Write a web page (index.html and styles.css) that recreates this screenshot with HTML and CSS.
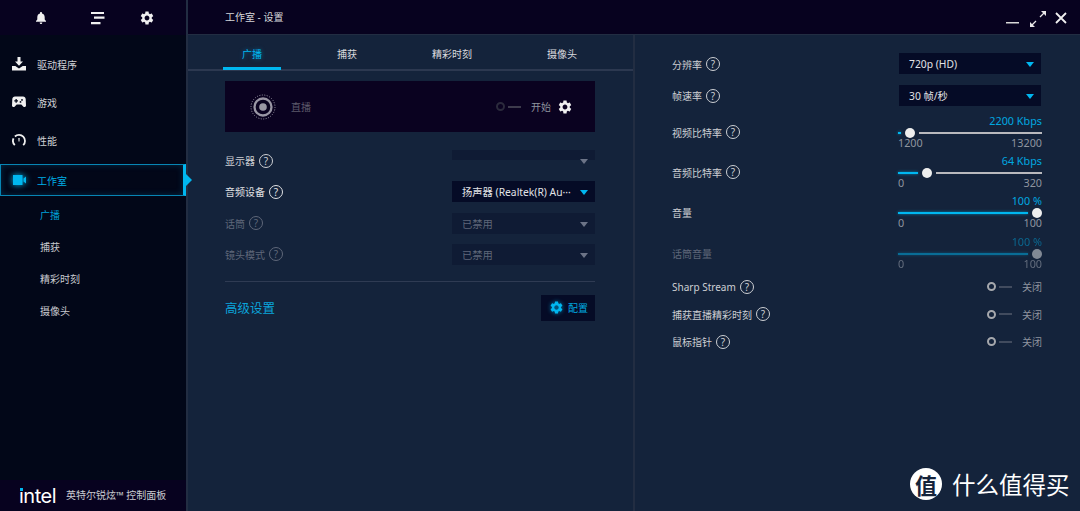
FILE: index.html
```html
<!DOCTYPE html>
<html lang="zh-CN">
<head>
    <meta charset="UTF-8">
    <title>英特尔锐炫 控制面板</title>
    <link rel="stylesheet" href="styles.css">
</head>
<body>
    <svg class="defs" width="0" height="0">
        <symbol id="gear" viewBox="0 0 24 24">
            <path fill-rule="evenodd" d="M19.14 12.94c.04-.3.06-.61.06-.94 0-.32-.02-.64-.07-.94l2.03-1.58c.18-.14.23-.41.12-.61l-1.92-3.32c-.12-.22-.37-.29-.59-.22l-2.39.96c-.5-.38-1.03-.7-1.62-.94l-.36-2.54c-.04-.24-.24-.41-.48-.41h-3.84c-.24 0-.43.17-.47.41l-.36 2.54c-.59.24-1.13.57-1.62.94l-2.39-.96c-.22-.08-.47 0-.59.22L2.74 8.87c-.12.21-.08.47.12.61l2.03 1.58c-.05.3-.09.63-.09.94s.02.64.07.94l-2.03 1.58c-.18.14-.23.41-.12.61l1.92 3.32c.12.22.37.29.59.22l2.39-.96c.5.38 1.03.7 1.62.94l.36 2.54c.05.24.24.41.48.41h3.84c.24 0 .44-.17.47-.41l.36-2.54c.59-.24 1.13-.56 1.62-.94l2.39.96c.22.08.47 0 .59-.22l1.92-3.32c.12-.22.07-.47-.12-.61l-2.01-1.58zM12 15.6c-1.98 0-3.6-1.62-3.6-3.6s1.62-3.6 3.6-3.6 3.6 1.62 3.6 3.6-1.62 3.6-3.6 3.6z"/>
        </symbol>
    </svg>

    <div class="app">
        <aside class="sidebar">
            <div class="side-top">
                <svg class="bell" width="12" height="12" viewBox="0 0 12 12"><path fill="#f0f0f0" d="M6 0c.6 0 1 .4 1 1v.4C8.800 1.900 9.700 3.300 9.700 5.200v2.300L11 9v.7H1V9l1.300-1.500V5.200C2.300 3.300 3.200 1.900 5 1.400V1c0-.6.400-1 1-1zM4.700 10.400h2.600C7.200 11.300 6.700 12 6 12s-1.200-.7-1.300-1.600z"/></svg>
                <svg class="lines" width="14" height="14" viewBox="0 0 14 14"><path fill="#f0f0f0" d="M0 1h13v2H0zM3 5.500h10.500v2.200H3zM0 11h9.500v2.200H0z"/></svg>
                <svg class="top-gear" width="16" height="16"><use href="#gear" fill="#f0f0f0"/></svg>
            </div>

            <nav class="nav">
                <a class="nav-item">
                    <svg width="14" height="14" viewBox="0 0 14 14"><path fill="#f0f0f0" d="M5.500 0h3v4.500h2.500L7 8.800 3 4.500h2.500zM0 9h3.300L7 11.500 10.700 9H14v4.500H0z"/></svg>
                    驱动程序
                </a>
                <a class="nav-item">
                    <svg width="14" height="14" viewBox="0 0 14 12"><path fill="#f0f0f0" fill-rule="evenodd" d="M3 .5h8c1.600 0 2.500 1 2.700 2.500l.3 6.500c0 1.500-1.800 2-2.800 1L9.300 8.500H4.700L2.800 10.500c-1 1-2.800.5-2.800-1L.3 3C.5 1.500 1.400.5 3 .5zM3.500 3v1.200H2.300v1.300h1.200v1.200h1.300V5.500H6V4.200H4.800V3zM10 3a.9.900 0 100 1.800A.9.900 0 0010 3zM8.500 5a.9.900 0 100 1.800.9.900 0 000-1.800z"/></svg>
                    游戏
                </a>
                <a class="nav-item">
                    <svg width="14" height="14" viewBox="0 0 14 14"><path fill="none" stroke="#f0f0f0" stroke-width="1.800" stroke-dasharray="7 2.500 30" d="M2.800 12.200A6 6 0 1111.200 12.200"/><path fill="#f0f0f0" d="M6.300 5h1.400l-.2 3.500h-1z"/></svg>
                    性能
                </a>
                <a class="nav-item active">
                    <svg width="13" height="10" viewBox="0 0 13 10"><path fill="#00b7f0" d="M0 0h9.500v10H0zM10.500 3.500L13 1.500v7l-2.500-2z"/></svg>
                    工作室
                </a>
                <div class="sub-nav">
                    <a class="sub-item current">广播</a>
                    <a class="sub-item">捕获</a>
                    <a class="sub-item">精彩时刻</a>
                    <a class="sub-item">摄像头</a>
                </div>
            </nav>

            <div class="side-foot">
                <span class="intel">ıntel<i class="intel-dot"></i></span>
                <span class="foot-name">英特尔锐炫™ 控制面板</span>
            </div>
        </aside>

        <main class="main">
            <header class="titlebar">
                <span class="title">工作室 - 设置</span>
                <div class="win-btns">
                    <svg width="13" height="3" viewBox="0 0 13 3"><path fill="#d8d8d8" d="M0 0h13v1.500H0z"/></svg>
                    <svg class="win-max" width="18" height="18" viewBox="0 0 18 18"><path fill="none" stroke="#e8e8e8" stroke-width="1.300" d="M11 7l4.500-4.500M7 11l-4.500 4.500"/><path fill="#e8e8e8" d="M12 1h5v5zM1 12v5h5z"/></svg>
                    <svg width="12" height="12" viewBox="0 0 12 12"><path fill="none" stroke="#f0f0f0" stroke-width="1.800" d="M1 1l10 10M11 1L1 11"/></svg>
                </div>
            </header>

            <div class="columns">
                <section class="col-left">
                    <div class="tabs">
                        <a class="tab active">广播</a>
                        <a class="tab">捕获</a>
                        <a class="tab">精彩时刻</a>
                        <a class="tab">摄像头</a>
                    </div>

                    <div class="left-body">
                        <div class="hero">
                            <svg class="target" width="26" height="26" viewBox="0 0 26 26">
                                <circle cx="13" cy="13" r="12" fill="none" stroke="#9a97a5" stroke-width="1" stroke-dasharray="1 1.500"/>
                                <circle cx="13" cy="13" r="8.500" fill="none" stroke="#9a97a5" stroke-width="2.300"/>
                                <circle cx="13" cy="13" r="3.800" fill="#9a97a5"/>
                            </svg>
                            <span class="hero-name">直播</span>
                            <span class="toggle hero-toggle"><i class="ring"></i><i class="dash"></i><span>开始</span></span>
                            <svg class="hero-gear" width="16" height="16"><use href="#gear" fill="#f0f0f0"/></svg>
                        </div>

                        <div class="field">
                            <span class="label">显示器 <i class="help">?</i></span>
                            <div class="select clipped"><i class="arrow"></i></div>
                        </div>
                        <div class="field">
                            <span class="label strong">音频设备 <i class="help">?</i></span>
                            <div class="select on"><span class="select-text">扬声器 (Realtek(R) Au···</span><i class="arrow"></i></div>
                        </div>
                        <div class="field off">
                            <span class="label">话筒 <i class="help">?</i></span>
                            <div class="select"><span class="select-text">已禁用</span><i class="arrow"></i></div>
                        </div>
                        <div class="field off">
                            <span class="label">镜头模式 <i class="help">?</i></span>
                            <div class="select"><span class="select-text">已禁用</span><i class="arrow"></i></div>
                        </div>

                        <div class="rule"></div>

                        <div class="advanced">
                            <span class="adv-title">高级设置</span>
                            <a class="config-btn">
                                <svg width="15" height="15"><use href="#gear" fill="#00b7f0"/></svg>
                                配置
                            </a>
                        </div>
                    </div>
                </section>

                <section class="col-right">
                    <div class="field wide">
                        <span class="label">分辨率 <i class="help">?</i></span>
                        <div class="select on"><span class="select-text">720p (HD)</span><i class="arrow"></i></div>
                    </div>
                    <div class="field wide">
                        <span class="label">帧速率 <i class="help">?</i></span>
                        <div class="select on"><span class="select-text">30 帧/秒</span><i class="arrow"></i></div>
                    </div>

                    <div class="slider-row">
                        <span class="label">视频比特率 <i class="help">?</i></span>
                        <div class="slider">
                            <div class="slider-val">2200 Kbps</div>
                            <div class="track"><i class="fill" style="width:3px"></i><i class="thumb"></i><i class="rest"></i></div>
                            <div class="ends"><span>1200</span><span>13200</span></div>
                        </div>
                    </div>
                    <div class="slider-row">
                        <span class="label">音频比特率 <i class="help">?</i></span>
                        <div class="slider">
                            <div class="slider-val">64 Kbps</div>
                            <div class="track"><i class="fill" style="width:20px"></i><i class="thumb"></i><i class="rest"></i></div>
                            <div class="ends"><span>0</span><span>320</span></div>
                        </div>
                    </div>
                    <div class="slider-row">
                        <span class="label">音量</span>
                        <div class="slider">
                            <div class="slider-val">100 %</div>
                            <div class="track"><i class="fill" style="width:130px"></i><i class="thumb"></i></div>
                            <div class="ends"><span>0</span><span>100</span></div>
                        </div>
                    </div>
                    <div class="slider-row off">
                        <span class="label">话筒音量</span>
                        <div class="slider">
                            <div class="slider-val">100 %</div>
                            <div class="track"><i class="fill" style="width:130px"></i><i class="thumb"></i></div>
                            <div class="ends"><span>0</span><span>100</span></div>
                        </div>
                    </div>

                    <div class="toggle-list">
                        <div class="toggle-row">
                            <span class="label">Sharp Stream <i class="help">?</i></span>
                            <span class="toggle"><i class="ring"></i><i class="dash"></i><span>关闭</span></span>
                        </div>
                        <div class="toggle-row">
                            <span class="label">捕获直播精彩时刻 <i class="help">?</i></span>
                            <span class="toggle"><i class="ring"></i><i class="dash"></i><span>关闭</span></span>
                        </div>
                        <div class="toggle-row">
                            <span class="label">鼠标指针 <i class="help">?</i></span>
                            <span class="toggle"><i class="ring"></i><i class="dash"></i><span>关闭</span></span>
                        </div>
                    </div>
                </section>
            </div>
        </main>
    </div>

    <div class="watermark">
        <span class="wm-badge">值</span>
        <span class="wm-text">什么值得买</span>
    </div>
</body>
</html>
```

FILE: styles.css
```css
* {
    box-sizing: border-box;
}

body {
    margin: 0;
    background-color: #14233b;
    color: #d4d6da;
    font-family: "Noto Sans", "Noto Sans CJK SC", sans-serif;
    font-size: 10px;
    overflow: hidden;
}

i {
    font-style: normal;
}

.defs {
    position: absolute;
}

.app {
    display: flex;
    width: 1080px;
    height: 511px;
}

/* sidebar */
.sidebar {
    display: flex;
    flex-direction: column;
    width: 188px;
    height: 511px;
    background-color: #020718;
    border-right: 2px solid #222d42;
}

.side-top {
    display: flex;
    align-items: center;
    height: 35px;
    padding-left: 35px;
    background-color: #07021f;
}

.lines {
    margin-left: 44px;
}

.top-gear {
    margin-left: 34px;
}

.nav {
    flex: 1;
    padding-top: 10px;
}

.nav-item {
    display: flex;
    align-items: center;
    gap: 11px;
    height: 38px;
    padding-left: 12px;
    color: #d0d2d6;
}

.nav-item.active {
    position: relative;
    height: 32px;
    margin-top: 5px;
    color: #00aee6;
    border: 1px solid #0785b4;
    border-right: 3px solid #00b7f0;
    box-shadow: inset 0 0 6px rgba(0, 150, 210, 0.25);
}

.nav-item.active svg {
    filter: drop-shadow(0 0 3px #00b7f0);
}

.nav-item.active::after {
    content: "";
    position: absolute;
    left: 100%;
    top: 9px;
    margin-left: 3px;
    border-left: 6px solid #00b7f0;
    border-top: 6px solid transparent;
    border-bottom: 6px solid transparent;
}

.sub-nav {
    padding-top: 2px;
}

.sub-item {
    display: flex;
    align-items: center;
    height: 32px;
    padding-left: 40px;
    color: #c8cacf;
}

.sub-item.current {
    color: #00a0d8;
}

.side-foot {
    display: flex;
    align-items: flex-end;
    height: 31px;
    padding: 0 0 5px 19px;
    background-color: #07021f;
}

.intel {
    position: relative;
    width: 47px;
    color: #fff;
    font-family: "Inter", sans-serif;
    font-size: 20px;
    line-height: 20px;
    letter-spacing: -0.5px;
}

.intel-dot {
    position: absolute;
    left: 1px;
    top: 2px;
    width: 3px;
    height: 3px;
    background-color: #00b7f0;
}

.foot-name {
    margin-bottom: 3px;
    color: #c9cbd0;
    line-height: 16px;
}

/* title bar */
.main {
    flex: 1;
    display: flex;
    flex-direction: column;
}

.titlebar {
    display: flex;
    align-items: center;
    justify-content: space-between;
    height: 35px;
    padding: 0 13px 0 37px;
    background-color: #07021f;
    border-bottom: 1px solid #222d42;
}

.title {
    margin-top: -2px;
    color: #d4d6da;
}

.win-btns {
    display: flex;
    align-items: center;
    gap: 10px;
    padding-top: 2px;
}

.win-btns svg:first-child {
    margin-top: 11px;
}

.win-max {
    margin-top: 1px;
    margin-right: -2px;
}

/* columns */
.columns {
    flex: 1;
    display: flex;
}

.col-left {
    width: 447px;
    border-right: 2px solid #222d42;
}

.tabs {
    display: flex;
    gap: 37px;
    height: 36px;
    padding-left: 35px;
    border-bottom: 2px solid #2c3850;
}

.tab {
    display: flex;
    align-items: center;
    height: 35px;
    padding: 1px 19px 0;
    color: #dadbdf;
}

.tab.active {
    color: #00b7f0;
    box-shadow: inset 0 -3px 0 #00b7f0;
    text-shadow: 0 0 4px rgba(0, 183, 240, 0.5);
}

.left-body {
    padding: 10px 38px 0 37px;
}

.hero {
    display: flex;
    align-items: center;
    height: 51px;
    margin-bottom: 18px;
    padding: 0 22px 0 25px;
    background-color: #0a0220;
}

.hero-name {
    margin-left: 15px;
    color: #5d5a6b;
}

.hero-toggle {
    margin-left: auto;
    color: #5d5a6b;
}

.hero-toggle .ring {
    border-color: #2b2a3c;
}

.hero-toggle .dash {
    background-color: #3d3b4c;
}

.hero-gear {
    margin-left: 6px;
}

/* form rows */
.field {
    display: flex;
    align-items: center;
    justify-content: space-between;
    height: 21px;
    margin-bottom: 10.25px;
}

.label {
    display: flex;
    align-items: center;
    gap: 4px;
    color: #cdcfd3;
}

.label.strong {
    color: #e0e1e4;
}

.help {
    display: inline-flex;
    align-items: center;
    justify-content: center;
    width: 14px;
    height: 14px;
    border: 1px solid currentColor;
    border-radius: 50%;
    font-size: 10px;
    line-height: 1;
}

.select {
    position: relative;
    display: flex;
    align-items: center;
    width: 143px;
    height: 21px;
    padding-left: 10px;
    background-color: #0f1b34;
    color: #5f6779;
}

.select.on {
    background-color: #050b26;
    color: #e2e3e6;
}

.select.clipped {
    background: linear-gradient(#0f1b34 10px, transparent 10px);
}

.select-text {
    font-size: 10.3px;
    white-space: nowrap;
}

.arrow {
    position: absolute;
    right: 7px;
    top: 9px;
    border-left: 4px solid transparent;
    border-right: 4px solid transparent;
    border-top: 5px solid #6c7487;
}

.select.on .arrow {
    border-top-color: #00b7f0;
}

.off .label {
    color: #5f6779;
}

.rule {
    height: 1px;
    margin-top: 16px;
    background-color: #2f3b53;
}

.advanced {
    display: flex;
    align-items: center;
    justify-content: space-between;
    margin-top: 13px;
}

.adv-title {
    color: #0aa5dc;
    font-size: 12.5px;
}

.config-btn {
    display: flex;
    align-items: center;
    gap: 4px;
    width: 54px;
    height: 26px;
    padding-left: 8px;
    background-color: #050b26;
    color: #00a8e0;
}

.config-btn svg {
    flex: none;
    filter: drop-shadow(0 0 2px rgba(0, 183, 240, 0.7));
}

/* right column */
.col-right {
    flex: 1;
    padding: 18.3px 38px 0 37px;
}

.wide .label {
    margin-top: 1px;
}

.wide .select {
    margin-right: 1px;
    width: 142px;
}

.wide + .wide {
    margin-bottom: 9.25px;
}

.slider-row {
    display: flex;
    align-items: flex-start;
    justify-content: space-between;
    height: 40px;
}

.slider-row .label {
    margin-top: 10px;
}

.slider-row.off {
    margin-top: 1px;
}

.slider {
    width: 144px;
    font-size: 10.8px;
}

.slider-val {
    color: #00a8e0;
    line-height: 12px;
    text-align: right;
}

.track {
    display: flex;
    align-items: center;
    gap: 4px;
    height: 12px;
}

.fill {
    height: 2px;
    background-color: #00b7f0;
    box-shadow: 0 0 3px rgba(0, 183, 240, 0.7);
}

.thumb {
    flex: none;
    width: 10px;
    height: 10px;
    border-radius: 50%;
    background-color: #eeeeee;
}

.rest {
    flex: 1;
    height: 2px;
    background-color: #b9b9bd;
}

.ends {
    display: flex;
    justify-content: space-between;
    margin-top: -2px;
    color: #8f949f;
    line-height: 12px;
}

.slider-row.off .slider {
    opacity: 0.5;
}

.slider-row.off .ends {
    color: #b0b4bd;
}

.toggle-list {
    margin-top: -3px;
}

.toggle-row {
    display: flex;
    align-items: center;
    justify-content: space-between;
    height: 27.5px;
}

.toggle {
    display: flex;
    align-items: center;
    color: #8f949f;
}

.ring {
    width: 9px;
    height: 9px;
    border: 2px solid #a6a8ad;
    border-radius: 50%;
}

.dash {
    width: 13px;
    height: 2px;
    margin: 0 10px 0 3px;
    background-color: #414b5e;
}

/* watermark */
.watermark {
    position: absolute;
    left: 910px;
    top: 468px;
    display: flex;
    align-items: center;
    gap: 10px;
    font-family: "Noto Sans CJK SC", sans-serif;
}

.wm-badge {
    display: flex;
    align-items: center;
    justify-content: center;
    width: 32px;
    height: 32px;
    border-radius: 50%;
    background-color: #fff;
    color: #14233b;
    font-size: 22px;
    font-weight: 700;
}

.wm-text {
    color: #fff;
    font-size: 23.5px;
    line-height: 32px;
}
```
